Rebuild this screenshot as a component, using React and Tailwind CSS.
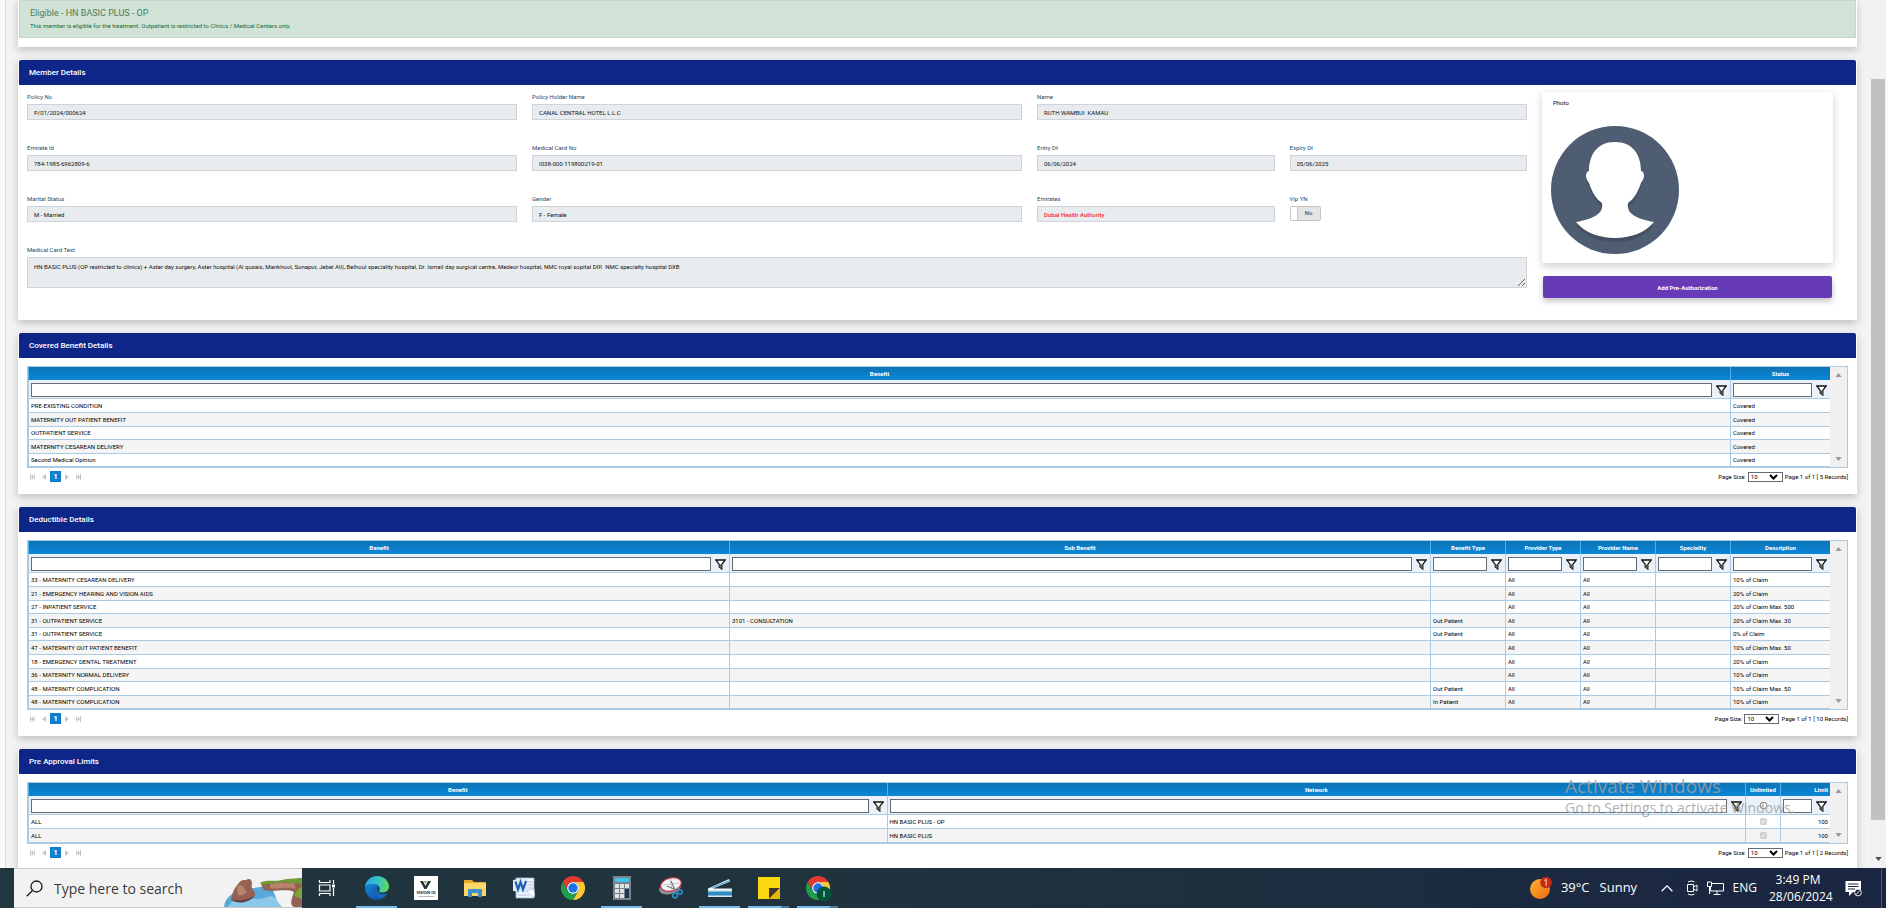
import React from "react";

const covered = [
  "PRE-EXISTING CONDITION",
  "MATERNITY OUT PATIENT BENEFIT",
  "OUTPATIENT SERVICE",
  "MATERNITY CESAREAN DELIVERY",
  "Second Medical Opinion",
].map((name) => [name, "Covered"]);

const deductible = [
  ["33 - MATERNITY CESAREAN DELIVERY", "", "", "All", "All", "", "10% of Claim"],
  ["21 - EMERGENCY HEARING AND VISION AIDS", "", "", "All", "All", "", "20% of Claim"],
  ["27 - INPATIENT SERVICE", "", "", "All", "All", "", "20% of Claim Max. 500"],
  ["31 - OUTPATIENT SERVICE", "3101 - CONSULTATION", "Out Patient", "All", "All", "", "20% of Claim Max. 30"],
  ["31 - OUTPATIENT SERVICE", "", "Out Patient", "All", "All", "", "0% of Claim"],
  ["47 - MATERNITY OUT PATIENT BENEFIT", "", "", "All", "All", "", "10% of Claim Max. 50"],
  ["18 - EMERGENCY DENTAL TREATMENT", "", "", "All", "All", "", "20% of Claim"],
  ["36 - MATERNITY NORMAL DELIVERY", "", "", "All", "All", "", "10% of Claim"],
  ["48 - MATERNITY COMPLICATION", "", "Out Patient", "All", "All", "", "10% of Claim Max. 50"],
  ["48 - MATERNITY COMPLICATION", "", "In Patient", "All", "All", "", "10% of Claim"],
];

const limits = [
  ["ALL", "HN BASIC PLUS - OP", true, "100"],
  ["ALL", "HN BASIC PLUS", true, "100"],
];

const coveredColumns = [
  { label: "Benefit", width: "" },
  { label: "Status", width: "w-[100px]" },
];

const deductibleColumns = [
  { label: "Benefit", width: "" },
  { label: "Sub Benefit", width: "" },
  { label: "Benefit Type", width: "w-[75px]" },
  { label: "Provider Type", width: "w-[75px]" },
  { label: "Provider Name", width: "w-[75px]" },
  { label: "Speciality", width: "w-[75px]" },
  { label: "Description", width: "w-[100px]" },
];

const limitColumns = [
  { label: "Benefit", width: "" },
  { label: "Network", width: "" },
  { label: "Unlimited", width: "w-[35px]", check: true },
  { label: "Limit", width: "w-[50px]", right: true },
];

function Card({ title, children }) {
  return (
    <section className="rounded-t-xs border-x border-b border-white bg-white shadow-[0_3px_8px_rgba(0,0,0,0.22)]">
      <h2 className="flex h-[25px] items-center rounded-t-xs bg-[#0d2687] pl-[10px] text-[8px] font-medium text-white">
        {title}
      </h2>
      {children}
    </section>
  );
}

function Field({ id, label, value, span, tone }) {
  return (
    <div className={`${span} flex flex-col`}>
      <label htmlFor={id} className="mb-[2px] h-[10px] text-[6px] leading-[10px] text-[#1d4b6b]">
        {label}
      </label>
      <input
        id={id}
        readOnly
        defaultValue={value}
        className={`h-4 w-full border border-[#ced4da] bg-[#e9ecef] px-[6px] pt-px text-[6px] outline-none ${tone || "text-[#111]"}`}
      />
    </div>
  );
}

function Avatar() {
  return (
    <svg viewBox="0 0 128 128" className="size-32" role="img" aria-label="Member photo">
      <circle cx="64" cy="64" r="64" fill="#4f5d73" />
      <path
        d="M64 20C46 20 38 34 38 49C35 48 34 54 38 60C41 70 45 76 51 81C52 90 42 96 25 99C34 111 49 116 64 116C79 116 94 111 103 99C86 96 76 90 77 81C83 76 87 70 90 60C94 54 93 48 90 49C90 34 82 20 64 20Z"
        fill="#444f61"
      />
      <path
        d="M64 16C46 16 38 29 38 45C34 46 34 52 38 57C41 66 45 73 51 77C53 88 42 93 25 96C34 107 49 112 64 112C79 112 94 107 103 96C86 93 75 88 77 77C83 73 87 66 90 57C94 52 94 46 90 45C90 29 82 16 64 16Z"
        fill="#fff"
      />
    </svg>
  );
}

function FunnelIcon() {
  return (
    <svg viewBox="0 0 11 11" className="size-[11px]" aria-hidden="true">
      <path d="M.8 1H10.2L6.8 5.4V10L4.2 8V5.4Z" fill="#fff" stroke="#111" strokeWidth="1.300" />
      <path d="M4.2 5.4H6.8V10L4.2 8Z" fill="#555" />
    </svg>
  );
}

function Filter({ column }) {
  if (column.check) {
    return (
      <div className="flex h-[18px] items-center justify-center">
        <input type="checkbox" aria-label={`Filter ${column.label}`} className="size-[7px]" />
      </div>
    );
  }
  return (
    <div className="flex h-[18px] items-center gap-[4px] pt-[2px] pr-[3px] pl-[2px]">
      <input
        aria-label={`Filter ${column.label}`}
        className="h-[14px] min-w-0 flex-1 border border-[#666b72] bg-white px-1 text-[6px] outline-none"
      />
      <button type="button" aria-label={`Filter options for ${column.label}`} className="shrink-0">
        <FunnelIcon />
      </button>
    </div>
  );
}

function Triangle({ down, className }) {
  return (
    <svg viewBox="0 0 8 5" className={className} aria-hidden="true">
      <path d={down ? "M0 0H8L4 5Z" : "M0 5H8L4 0Z"} fill="currentColor" />
    </svg>
  );
}

function Grid({ columns, rows }) {
  return (
    <div className="flex border border-[#a9cbe6] bg-[#f0f0f0]">
      <div className="min-w-0 flex-1">
        <table className="w-full table-fixed border-separate border-spacing-0 bg-white text-[6px] leading-[12px] text-black">
          <thead>
            <tr>
              {columns.map((c) => (
                <th
                  key={c.label}
                  className={`${c.width} h-[13px] overflow-hidden border-l border-[#4db2f2] bg-linear-to-b from-[#0d74b5] to-[#0a86d8] px-[2px] py-0 font-bold whitespace-nowrap text-white ${c.right ? "text-right" : "text-center"}`}
                >
                  {c.label}
                </th>
              ))}
            </tr>
            <tr>
              {columns.map((c) => (
                <td key={c.label} className="h-[19px] border-b border-l border-[#a9cbe6] bg-[#eaf1f8] p-0">
                  <Filter column={c} />
                </td>
              ))}
            </tr>
          </thead>
          <tbody>
            {rows.map((row, r) => (
              <tr key={r} className="h-[14px] even:bg-[#f4f4f4] nth-[5n+3]:h-[13px] nth-[5n]:h-[13px]">
                {row.map((cell, i) => (
                  <td
                    key={i}
                    className={`overflow-hidden border-b border-l border-[#a9cbe6] px-[2px] py-0 whitespace-nowrap ${columns[i].right ? "text-right" : ""}`}
                  >
                    {cell === true ? (
                      <input
                        type="checkbox"
                        defaultChecked
                        disabled
                        aria-label="Unlimited"
                        className="mx-auto block size-[7px]"
                      />
                    ) : (
                      cell
                    )}
                  </td>
                ))}
              </tr>
            ))}
          </tbody>
        </table>
      </div>
      <div className="flex w-[17px] shrink-0 flex-col items-center justify-between py-[6px] text-[#9b9b9b]">
        <Triangle className="h-[4px] w-[7px]" />
        <Triangle down className="h-[4px] w-[7px]" />
      </div>
    </div>
  );
}

function PagerIcon({ d, label }) {
  return (
    <button type="button" aria-label={label} className="flex h-[11px] items-center text-[#c6c6c6]">
      <svg viewBox="0 0 5 6" className="h-[6px] w-[5px]" aria-hidden="true">
        <path d={d} fill="currentColor" />
      </svg>
    </button>
  );
}

function Pager({ id, count }) {
  return (
    <div className="flex h-[14px] items-end justify-between text-[6px] leading-[10px] text-black">
      <div className="flex items-center gap-[7px] pl-[3px]">
        <PagerIcon label="First page" d="M0 0H1V6H0ZM3 0V6L1 3ZM5 0V6L3 3Z" />
        <div className="flex items-center gap-[3px]">
          <PagerIcon label="Previous page" d="M4 0V6L0 3Z" />
          <button type="button" className="h-[11px] w-[11px] bg-[#0b7fd0] text-[8px] leading-[11px] font-bold text-white">
            1
          </button>
          <PagerIcon label="Next page" d="M1 0V6L5 3Z" />
        </div>
        <PagerIcon label="Last page" d="M0 0V6L2 3ZM2 0V6L4 3ZM4 0H5V6H4Z" />
      </div>
      <div className="flex items-center gap-[2px]">
        <label htmlFor={id}>Page Size:</label>
        <div className="relative">
          <select
            id={id}
            defaultValue="10"
            className="block h-[10px] w-[35px] appearance-none border border-[#666b72] bg-white pl-[2px] text-[6px] leading-[8px] outline-none"
          >
            <option>10</option>
            <option>20</option>
            <option>50</option>
          </select>
          <svg viewBox="0 0 9 6" className="pointer-events-none absolute top-[2px] right-[5px] h-[6px] w-[9px]" aria-hidden="true">
            <path d="M1 1L4.500 4.500L8 1" fill="none" stroke="#000" strokeWidth="2" />
          </svg>
        </div>
        <span className="whitespace-pre">{`Page 1 of 1 [ ${count} Records]`}</span>
      </div>
    </div>
  );
}

function GridCard({ id, title, columns, rows }) {
  return (
    <Card title={title}>
      <div className="px-2 pt-2 pb-[11px]">
        <Grid columns={columns} rows={rows} />
        <Pager id={id} count={rows.length} />
      </div>
    </Card>
  );
}

function MemberDetails() {
  return (
    <Card title="Member Details">
      <div className="flex gap-[15px] pt-[7px] pr-[23px] pb-[21px] pl-2">
        <div className="grid min-w-0 flex-1 grid-cols-12 content-start gap-x-[15px] gap-y-[23px]">
          <Field id="policy" label="Policy No" value="P/01/2024/000624" span="col-span-4" />
          <Field id="holder" label="Policy Holder Name" value="CANAL CENTRAL HOTEL L.L.C" span="col-span-4" />
          <Field id="name" label="Name" value="RUTH WAMBUI  KAMAU" span="col-span-4" />
          <Field id="emirate" label="Emirate Id" value="784-1985-6962809-6" span="col-span-4" />
          <Field id="card" label="Medical Card No" value="I038-000-119800219-01" span="col-span-4" />
          <Field id="entry" label="Entry Dt" value="06/06/2024" span="col-span-2" />
          <Field id="expiry" label="Expiry Dt" value="05/06/2025" span="col-span-2" />
          <Field id="marital" label="Marital Status" value="M - Married" span="col-span-4" />
          <Field id="gender" label="Gender" value="F - Female" span="col-span-4" />
          <Field
            id="emirates"
            label="Emirates"
            value="Dubai Health Authority"
            span="col-span-2"
            tone="font-medium text-[#ff1f2f]"
          />
          <div className="col-span-2 flex flex-col items-start">
            <span className="mb-[2px] h-[10px] text-[6px] leading-[10px] text-[#1d4b6b]">Vip YN</span>
            <button
              type="button"
              role="switch"
              aria-checked="false"
              aria-label="Vip YN"
              className="flex h-[15px] w-[31px] overflow-hidden rounded-xs border border-[#c6c6c6] bg-[#e4e4e4] text-[6px] text-[#333]"
            >
              <span className="h-full w-[7px] border-r border-[#c6c6c6] bg-white" />
              <span className="flex-1 leading-[12px]">No</span>
            </button>
          </div>
          <div className="col-span-12 flex flex-col">
            <label htmlFor="cardtext" className="mb-[2px] h-[10px] text-[6px] leading-[10px] text-[#1d4b6b]">
              Medical Card Text
            </label>
            <textarea
              id="cardtext"
              readOnly
              className="h-[31px] w-full resize-y border border-[#ced4da] bg-[#e9ecef] px-[6px] py-[4px] text-[6px] leading-[10px] text-[#111] outline-none"
              defaultValue="HN BASIC PLUS (OP restricted to clinics) + Aster day surgery, Aster hospital (Al qusais, Mankhool, Sonapur, Jebel Ali), Belhoul speciality hospital, Dr. Ismail day surgical centre, Medeor hospital, NMC royal sopital DIP,  NMC specialty hospital DXB"
            />
          </div>
        </div>
        <div className="flex w-[291px] shrink-0 flex-col gap-[13px]">
          <div className="h-[171px] rounded-xs bg-white px-[9px] pt-[6px] shadow-[0_3px_8px_rgba(0,0,0,0.2)]">
            <p className="mb-[18px] pl-[2px] text-[6px] leading-[10px] text-black">Photo</p>
            <Avatar />
          </div>
          <button
            type="button"
            className="mx-px h-[22px] rounded-xs bg-[#673ab7] text-[6px] font-bold text-white shadow-[0_3px_6px_rgba(0,0,0,0.25)]"
          >
            Add Pre-Authorization
          </button>
        </div>
      </div>
    </Card>
  );
}

function ChromeIcon({ badge }) {
  return (
    <svg viewBox="0 0 48 48" className="size-6 overflow-visible" aria-hidden="true">
      <circle cx="24" cy="24" r="12" fill="#fff" />
      <path d="M24,12H44.7812a23.9939,23.9939,0,0,0-41.5639.0029L13.6079,30l.0093-.0024A11.9852,11.9852,0,0,1,24,12Z" fill="#e33b2e" />
      <path d="M34.3913,30.0029,24.0007,48A23.994,23.994,0,0,0,44.78,12.0031H23.9989l-.0025.0093A11.985,11.985,0,0,1,34.3913,30.0029Z" fill="#fcc934" />
      <path d="M13.6086,30.0031,3.218,12.006A23.994,23.994,0,0,0,24.0025,48L34.3931,30.0029l-.0067-.0068a11.9852,11.9852,0,0,1-20.7778.007Z" fill="#1e9e4a" />
      <circle cx="24" cy="24" r="9.500" fill="#1a73e8" />
      {badge && (
        <g>
          <circle cx="36" cy="36" r="15" fill="#04543c" />
          <path d="M36 30V42" stroke="#cfe8dc" strokeWidth="2.500" />
        </g>
      )}
    </svg>
  );
}

function EdgeIcon() {
  return (
    <svg viewBox="0 0 24 24" className="size-6" aria-hidden="true">
      <defs>
        <linearGradient id="edgeTop" x1="0" y1="0.4" x2="1" y2="0.5">
          <stop offset="0" stopColor="#2aa7e8" />
          <stop offset="0.55" stopColor="#34c6c0" />
          <stop offset="1" stopColor="#62d957" />
        </linearGradient>
        <linearGradient id="edgeLow" x1="0" y1="0" x2="0.6" y2="1">
          <stop offset="0" stopColor="#1685d6" />
          <stop offset="1" stopColor="#0c5ab0" />
        </linearGradient>
      </defs>
      <path d="M12 0C18.600 0 24 4.800 24 10.500C24 14.200 21 16.500 17.500 16.500C15 16.500 13.600 15.500 14.200 14.500C15.300 12.500 14.500 8 8.500 8C4 8 .5 10 0 12C0 5.400 5.400 0 12 0Z" fill="url(#edgeTop)" />
      <path d="M0 12C.5 9 4 7.800 8.500 8C11 8.200 13.600 9.500 14.500 11.500C11 9.500 8 12 8.300 15.500C8.600 19.500 12 22.500 17 22.600C15.500 23.500 13.700 24 12 24C5.400 24 0 18.600 0 12Z" fill="url(#edgeLow)" />
      <path d="M8.300 15.500C8 12 10.500 10 13 10.600C11.500 13 12.500 18 18 18C20 18 21.500 17.400 22.500 17C21.300 19.700 19.200 21.700 17 22.600C12 22.500 8.600 19.500 8.300 15.500Z" fill="#1566b8" />
    </svg>
  );
}

function SearchArt() {
  return (
    <svg viewBox="0 0 78 29" className="h-[29px] w-[78px]" aria-hidden="true">
      <path d="M0 29C1 20 8 14 18 12L42 8C52 10 50 20 56 29Z" fill="#57a9dc" />
      <path d="M4 29C8 20 20 20 30 21C42 22 44 16 50 19L58 29Z" fill="#8bc8ea" />
      <path d="M7 22C8 14 11 10 14 6C17 1 21 2 22 2C25 0 28 1 28 6C26 11 32 12 31 18C26 23 12 26 7 22Z" fill="#946153" />
      <path d="M13 9C16 5 20 8 21 12C25 14 20 18 14 17Z" fill="#b9826d" />
      <path d="M8 21C14 24 24 22 30 18C26 25 12 27 8 21Z" fill="#5e3f42" />
      <path d="M37 6C42 2 54 4 62 2L78 0V29H70C65 27 68 20 70 14C62 10 48 15 40 12Z" fill="#946153" />
      <path d="M46 6C52 4 62 6 70 5L72 11C62 8 54 12 46 10Z" fill="#b9826d" />
      <path d="M36 5C42 1 50 4 58 2C64 0 72 1 78 0V7C72 3 68 7 62 4C54 6 44 5 38 7Z" fill="#6f9a35" />
      <path d="M72 14C75 9 77 10 78 8V22C75 18 72 20 70 17Z" fill="#7ba63a" />
    </svg>
  );
}

function TaskButton({ label, active, stacked, children }) {
  return (
    <button type="button" aria-label={label} className="relative flex h-10 w-[49px] items-center justify-center">
      {children}
      {active && (
        <span className="absolute inset-x-1 bottom-0 flex h-[2px]">
          <span className="flex-1 bg-[#76b9ed]" />
          {stacked && <span className="w-2 bg-[#4d7ea6]" />}
        </span>
      )}
    </button>
  );
}

function Taskbar() {
  return (
    <footer className="flex h-10 shrink-0 justify-between bg-linear-to-r from-[#21363f] via-[#20323d] to-[#1a2542] font-['Open_Sans','Noto_Sans',sans-serif] text-white">
      <div className="flex">
        <div className="ml-[14px] flex w-[288px] items-center border-y border-[#c8c8c8] bg-[#f2f2f2] pl-3">
          <svg viewBox="0 0 17 17" className="size-[17px]" aria-hidden="true">
            <circle cx="10.500" cy="6.500" r="5.500" fill="none" stroke="#1a1a1a" strokeWidth="1.300" />
            <path d="M6.500 10.500L.8 16.200" stroke="#1a1a1a" strokeWidth="1.300" />
          </svg>
          <input
            aria-label="Type here to search"
            placeholder="Type here to search"
            className="ml-[11px] min-w-0 flex-1 bg-transparent text-[14px] text-[#3a3a3a] outline-none placeholder:text-[#3a3a3a]"
          />
          <div className="self-end">
            <SearchArt />
          </div>
        </div>
        <TaskButton label="Task view">
          <svg viewBox="0 0 18 16" className="h-4 w-[18px]" fill="none" stroke="#fff" strokeWidth="1.200" aria-hidden="true">
            <path d="M1.500 0V2.500H12V0M1.500 16V13.500H12V16M1.500 5H12V11H1.500ZM15.500 0V4M15.500 8V16" />
            <path d="M14 4.500H17V7.500H14Z" fill="#fff" stroke="none" />
          </svg>
        </TaskButton>
        <div className="flex pl-px">
          <TaskButton label="Edge" active>
            <EdgeIcon />
          </TaskButton>
          <TaskButton label="Vision ID">
            <svg viewBox="0 0 24 24" className="size-6" aria-hidden="true">
              <path d="M0 0H24V24H0Z" fill="#fff" />
              <path d="M6 5H9L11.500 10L14 5H17L12.500 13H10.500Z" fill="#243238" />
              <path d="M10 5H13L11.500 8Z" fill="#6ea83e" />
              <text x="12" y="18" textAnchor="middle" fontSize="4" fontWeight="700" fill="#222">VISION ID</text>
              <path d="M4 20.500H20" stroke="#aaa" strokeWidth="0.800" />
            </svg>
          </TaskButton>
          <TaskButton label="File Explorer">
            <svg viewBox="0 0 22 20" className="h-5 w-[22px]" aria-hidden="true">
              <path d="M0 2H8L10 4H22V18H0Z" fill="#e5a92c" />
              <path d="M0 5H22V18H0Z" fill="#fbd669" />
              <path d="M4 19V12Q4 11 5 11H17Q18 11 18 12V19H14V15H8V19Z" fill="#3f8fd0" />
            </svg>
          </TaskButton>
          <TaskButton label="Word">
            <svg viewBox="0 0 22 22" className="size-[22px]" aria-hidden="true">
              <path d="M3 1H21V21H3Z" fill="#f4f7fb" stroke="#9db4d2" strokeWidth="0.800" />
              <path d="M15 5H20M15 8H20M15 11H20M5 18H16" stroke="#a9bfda" />
              <path d="M0 3L15 1V16L0 14Z" fill="#dce8f6" />
              <path d="M2.500 4.500L5 12.500L7.500 5L10 12.500L13 4" fill="none" stroke="#1f5fb4" strokeWidth="2.200" />
              <path d="M14 14L21 12L22 20L17 18Z" fill="#fff" stroke="#9db4d2" strokeWidth="0.600" />
            </svg>
          </TaskButton>
          <TaskButton label="Chrome">
            <ChromeIcon />
          </TaskButton>
          <TaskButton label="Calculator" active>
            <svg viewBox="0 0 18 24" className="h-6 w-[18px]" aria-hidden="true">
              <path d="M0 0H18V24H0Z" fill="#7b8288" />
              <path d="M2 2H16V6H2Z" fill="#3fc6ee" />
              <path d="M2 8H6V12H2ZM7 8H11V12H7ZM12 8H16V12H12ZM2 13H6V17H2ZM7 13H11V17H7ZM2 18H6V22H2ZM7 18H11V22H7Z" fill="#dfe3e6" />
              <path d="M12 13H16V22H12Z" fill="#17375e" />
            </svg>
          </TaskButton>
          <TaskButton label="Snipping Tool">
            <svg viewBox="0 0 24 22" className="h-[22px] w-6" aria-hidden="true">
              <ellipse cx="11" cy="11" rx="11" ry="6" transform="rotate(-14 11 11)" fill="#8e969b" />
              <ellipse cx="12" cy="7.500" rx="10.500" ry="6.500" transform="rotate(-14 12 7.500)" fill="#f4f4f6" stroke="#c8324a" strokeWidth="1.300" />
              <path d="M4 8L20 6M11 2L13 13" stroke="#b8bec4" strokeWidth="0.800" />
              <path d="M12 4L17 15M8 9L20 14" stroke="#777" strokeWidth="1.200" />
              <circle cx="16" cy="18.500" r="2.300" fill="none" stroke="#2f8cc0" strokeWidth="1.700" />
              <circle cx="21" cy="15" r="2.200" fill="none" stroke="#2f8cc0" strokeWidth="1.700" />
            </svg>
          </TaskButton>
          <TaskButton label="Scanner" active>
            <svg viewBox="0 0 24 18" className="h-[18px] w-6" aria-hidden="true">
              <path d="M0 9.500L21 0L22 2.500L5 9.500H24V11H0Z" fill="#e9f4fb" />
              <path d="M2 9L21 1.200L21.600 2L6 8.600Z" fill="#3b9fd6" />
              <path d="M0 12H24V17H0Z" fill="#2f8cc0" />
              <path d="M0 11H24V12.500H0ZM0 16.500H24V18H0Z" fill="#d4e8f4" />
            </svg>
          </TaskButton>
          <TaskButton label="Sticky Notes" active stacked>
            <svg viewBox="0 0 22 22" className="size-[22px]" aria-hidden="true">
              <path d="M0 0H22V22H0Z" fill="#fbd80d" />
              <path d="M11 22V11H22Z" fill="#3f3a30" />
              <path d="M22 11V22H11Z" fill="#e6b70c" />
            </svg>
          </TaskButton>
          <TaskButton label="Chrome profile" active stacked>
            <ChromeIcon badge />
          </TaskButton>
        </div>
      </div>

      <div className="flex items-center text-[13px]">
        <svg viewBox="0 0 24 24" className="size-6" aria-hidden="true">
          <defs>
            <linearGradient id="sun" x1="0" y1="0" x2="1" y2="1">
              <stop offset="0" stopColor="#fbb034" />
              <stop offset="1" stopColor="#ef6c0c" />
            </linearGradient>
          </defs>
          <circle cx="11" cy="13" r="10" fill="url(#sun)" />
          <circle cx="17" cy="6.500" r="5.800" fill="#c42b1c" />
          <text x="17" y="9.500" textAnchor="middle" fontSize="8.500" fill="#fff">1</text>
        </svg>
        <span className="ml-2">39°C</span>
        <span className="ml-[10px] w-[61px]">Sunny</span>
        <svg viewBox="0 0 12 7" className="h-[7px] w-3" fill="none" stroke="#fff" strokeWidth="1.300" aria-hidden="true">
          <path d="M.6 6.300L6 .9L11.400 6.300" />
        </svg>
        <svg viewBox="0 0 12 16" className="ml-[13px] h-4 w-3" fill="none" stroke="#fff" aria-hidden="true">
          <path d="M1.500 4.500H7.500V11.500H1.500ZM7.500 7L11 5V11L7.500 9M2 2Q5 0 8.500 1.800M2 14Q5 16 8.500 14.200" />
        </svg>
        <svg viewBox="0 0 17 14" className="ml-[9px] h-[14px] w-[17px]" fill="none" stroke="#fff" aria-hidden="true">
          <path d="M5 2.500H16.500V10H3.500V6M10 10V13M6.500 13.500H13.500M.5 1H4.500V5.500H.5ZM2.500 5.500V13" />
        </svg>
        <span className="ml-[9px] text-[12px]">ENG</span>
        <div className="ml-3 w-[58px] text-center text-[12px] leading-[17px]">
          <div>3:49 PM</div>
          <div className="whitespace-nowrap">28/06/2024</div>
        </div>
        <svg viewBox="0 0 17 17" className="mr-[19px] ml-[18px] size-[17px]" aria-hidden="true">
          <path d="M.5 1H16V12H8L4 16V12H.5Z" fill="#fff" />
          <path d="M3 4H13.500M3 6.500H13.500M3 9H10" stroke="#1b2740" />
          <circle cx="13" cy="12.500" r="3.400" fill="#1b2740" stroke="#fff" strokeWidth="0.900" />
          <path d="M10.800 14.700L15.200 10.300" stroke="#fff" strokeWidth="0.900" />
        </svg>
        <span className="mr-1 h-full w-px bg-[#4d5873]" />
      </div>
    </footer>
  );
}

export default function App() {
  return (
    <div className="relative flex h-screen flex-col overflow-hidden bg-[#f3f3f3] font-[Roboto,sans-serif]">
      <div className="flex min-h-0 flex-1">
        <div className="w-[6px] shrink-0 border-r border-[#dcdcdc] bg-[#fafafa]" />
        <main className="flex min-w-0 flex-1 flex-col gap-[13px] overflow-hidden pr-[13px] pl-3">
          <div className="border-x border-white bg-white pb-[9px] shadow-[0_3px_8px_rgba(0,0,0,0.22)]">
            <div className="h-[38px] border border-[#c3d7cc] bg-[#d1e2d7] pt-[5px] pl-[10px] text-[#4a8058]">
              <p className="text-[9px] leading-[14px]">Eligible - HN BASIC PLUS - OP</p>
              <p className="mt-px text-[6px] leading-[10px] text-[#1f6a32]">
                This member is eligible for the treatment. Outpatient is restricted to Clinics / Medical Centers only.
              </p>
            </div>
          </div>
          <MemberDetails />
          <GridCard id="size-covered" title="Covered Benefit Details" columns={coveredColumns} rows={covered} />
          <GridCard id="size-deductible" title="Deductible Details" columns={deductibleColumns} rows={deductible} />
          <GridCard id="size-limits" title="Pre Approval Limits" columns={limitColumns} rows={limits} />
        </main>
        <div className="flex w-4 shrink-0 flex-col items-center bg-[#f1f1f1] pt-[79px] pb-[7px]">
          <div className="w-[14px] flex-1 bg-[#c1c1c1]" />
          <Triangle down className="mt-[37px] h-[4px] w-[7px] text-[#505050]" />
        </div>
      </div>
      <Taskbar />
      <div className="pointer-events-none absolute right-[86px] bottom-[90px] w-[235px] font-['Open_Sans','Noto_Sans',sans-serif] whitespace-nowrap text-[#9ba0a5]/85">
        <p className="text-[19px] leading-[24px]">Activate Windows</p>
        <p className="text-[14px] leading-[20px]">Go to Settings to activate Windows.</p>
      </div>
    </div>
  );
}
